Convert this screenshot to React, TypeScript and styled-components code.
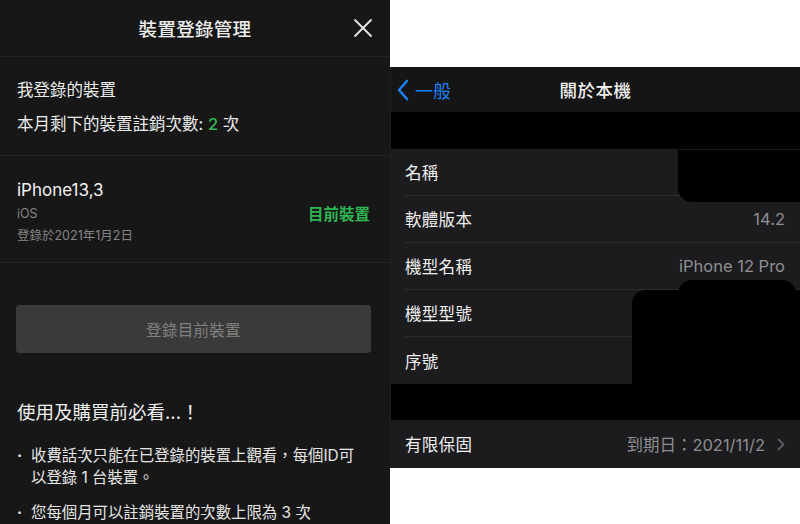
import * as React from 'react';
import styled, { createGlobalStyle } from 'styled-components';

const GlobalStyle = createGlobalStyle`
  html, body {
    margin: 0;
    padding: 0;
    background: #ffffff;
  }
  body {
    font-family: Inter, 'Noto Sans CJK TC', sans-serif;
  }
`;

const Page = styled.div`
  display: flex;
  width: 800px;
  height: 524px;
  overflow: hidden;
`;

/* ---------- left: device management sheet ---------- */

const Sheet = styled.div`
  width: 390px;
  flex: none;
  background: #171717;
  color: #ececec;
  display: flex;
  flex-direction: column;
`;

const SheetHeader = styled.div`
  height: 57px;
  display: grid;
  grid-template-columns: 1fr auto 1fr;
  align-items: center;
  border-bottom: 1px solid #242424;
`;

const SheetTitle = styled.div`
  grid-column: 2;
  font-size: 18.5px;
  font-weight: 500;
  letter-spacing: 0.3px;
  color: #eeeeee;
`;

const CloseButton = styled.div`
  justify-self: end;
  display: flex;
  padding-right: 17px;
`;

const Block = styled.div<{ $pad: string }>`
  padding: ${p => p.$pad};
  border-bottom: 1px solid #242424;
`;

const Line = styled.div<{ $size: number; $lh: number; $color?: string }>`
  font-size: ${p => p.$size}px;
  line-height: ${p => p.$lh}px;
  color: ${p => p.$color || '#ececec'};
`;

const Green = styled.span`
  color: #35b555;
  font-weight: 500;
`;

const DeviceRow = styled(Block)`
  display: flex;
  align-items: center;
  justify-content: space-between;
`;

const CurrentTag = styled.div`
  font-size: 15.5px;
  font-weight: 700;
  color: #2fb552;
  margin-top: 2px;
`;

const RegisterButton = styled.div`
  margin: 42px 19px 0 16px;
  height: 48px;
  border-radius: 4px;
  background: #3a3a3a;
  color: #808080;
  font-size: 15.5px;
  display: flex;
  align-items: center;
  justify-content: center;
  letter-spacing: 0.3px;
`;

const NoticeTitle = styled.div`
  margin: 45px 0 0 17px;
  font-size: 18.5px;
  line-height: 28px;
  color: #efefef;
`;

const NoticeList = styled.ul`
  list-style: none;
  margin: 19px 29px 0 17px;
  padding: 0;
  display: flex;
  flex-direction: column;
  gap: 13px;
`;

const NoticeItem = styled.li`
  display: flex;
  gap: 9px;
  font-size: 15.4px;
  line-height: 22px;
  color: #e6e6e6;
  &::before {
    content: '·';
    width: 5px;
    flex: none;
    font-weight: 700;
  }
`;

/* ---------- right: iOS about screen ---------- */

const RightColumn = styled.div`
  flex: 1;
  display: flex;
  flex-direction: column;
  padding-top: 67px;
`;

const Phone = styled.div`
  position: relative;
  height: 401px;
  background: #000000;
  display: flex;
  flex-direction: column;
  border-left: 1px solid #1f1f1f;
`;

const NavBar = styled.div`
  height: 46px;
  background: #151515;
  display: grid;
  grid-template-columns: 1fr auto 1fr;
  align-items: center;
`;

const BackLink = styled.div`
  display: flex;
  align-items: center;
  gap: 6px;
  padding-left: 6px;
  color: #1c80f0;
  font-size: 18px;
`;

const NavTitle = styled.div`
  grid-column: 2;
  font-size: 17.5px;
  font-weight: 500;
  color: #f2f2f2;
  letter-spacing: 0.5px;
`;

const Group = styled.div<{ $top: number }>`
  margin-top: ${p => p.$top}px;
  background: #1c1c1e;
`;

const Row = styled.div<{ $h: number; $last?: boolean }>`
  height: ${p => p.$h}px;
  margin-left: 14px;
  padding-right: 15px;
  display: flex;
  align-items: center;
  justify-content: space-between;
  box-sizing: border-box;
  border-bottom: ${p => (p.$last ? 'none' : '1px solid #2d2d30')};
`;

const RowLabel = styled.div`
  font-size: 16.5px;
  color: #f0f0f0;
  letter-spacing: 0.3px;
`;

const RowValue = styled.div`
  display: flex;
  align-items: center;
  gap: 12px;
  font-size: 16.5px;
  color: #8e8e93;
`;

const Redaction = styled.div<{ $r: string }>`
  position: absolute;
  background: #000000;
  border-radius: ${p => p.$r};
`;

const Close = () => (
  <svg width="20" height="20" viewBox="0 0 20 20">
    <path d="M2 2 L18 18 M18 2 L2 18" stroke="#e8e8e8" strokeWidth="1.8" strokeLinecap="round" />
  </svg>
);

const BackChevron = () => (
  <svg width="12" height="22" viewBox="0 0 12 22">
    <path d="M10 2 L2 11 L10 20" stroke="#1c80f0" strokeWidth="2.6" fill="none" strokeLinecap="round" strokeLinejoin="round" />
  </svg>
);

const Chevron = () => (
  <svg width="8" height="13" viewBox="0 0 8 13">
    <path d="M1.5 1.5 L6.5 6.5 L1.5 11.5" stroke="#5e5e62" strokeWidth="1.8" fill="none" strokeLinecap="round" strokeLinejoin="round" />
  </svg>
);

const aboutRows = [
  { label: '名稱', value: '' },
  { label: '軟體版本', value: '14.2' },
  { label: '機型名稱', value: 'iPhone 12 Pro' },
  { label: '機型型號', value: '' },
  { label: '序號', value: '' },
];

export default function App() {
  return (
    <>
      <GlobalStyle />
      <Page>
        <Sheet>
          <SheetHeader>
            <SheetTitle>裝置登錄管理</SheetTitle>
            <CloseButton>
              <Close />
            </CloseButton>
          </SheetHeader>

          <Block $pad="16px 17px 14px">
            <Line $size={16.5} $lh={34}>我登錄的裝置</Line>
            <Line $size={16.5} $lh={34}>
              本月剩下的裝置註銷次數: <Green>2</Green> 次
            </Line>
          </Block>

          <DeviceRow $pad="21px 20px 15px 17px">
            <div>
              <Line $size={17} $lh={26} $color="#f2f2f2">iPhone13,3</Line>
              <Line $size={12.5} $lh={22} $color="#858585">iOS</Line>
              <Line $size={12.5} $lh={22} $color="#858585">登錄於2021年1月2日</Line>
            </div>
            <CurrentTag>目前裝置</CurrentTag>
          </DeviceRow>

          <RegisterButton>登錄目前裝置</RegisterButton>

          <NoticeTitle>使用及購買前必看...！</NoticeTitle>
          <NoticeList>
            <NoticeItem>收費話次只能在已登錄的裝置上觀看，每個ID可以登錄 1 台裝置。</NoticeItem>
            <NoticeItem>您每個月可以註銷裝置的次數上限為 3 次</NoticeItem>
          </NoticeList>
        </Sheet>

        <RightColumn>
          <Phone>
            <NavBar>
              <BackLink>
                <BackChevron />
                一般
              </BackLink>
              <NavTitle>關於本機</NavTitle>
            </NavBar>

            <Group $top={37}>
              {aboutRows.map((r, i) => (
                <Row key={r.label} $h={47} $last={i === aboutRows.length - 1}>
                  <RowLabel>{r.label}</RowLabel>
                  <RowValue>{r.value}</RowValue>
                </Row>
              ))}
            </Group>

            <Group $top={36}>
              <Row $h={48} $last>
                <RowLabel>有限保固</RowLabel>
                <RowValue>
                  到期日：2021/11/2
                  <Chevron />
                </RowValue>
              </Row>
            </Group>

            <Redaction $r="0 0 0 14px" style={{ left: 287, top: 83, width: 123, height: 52 }} />
            <Redaction $r="14px 14px 0 0" style={{ left: 287, top: 213, width: 118, height: 20 }} />
            <Redaction $r="14px 0 0 0" style={{ left: 241, top: 223, width: 169, height: 94 }} />
          </Phone>
        </RightColumn>
      </Page>
    </>
  );
}
